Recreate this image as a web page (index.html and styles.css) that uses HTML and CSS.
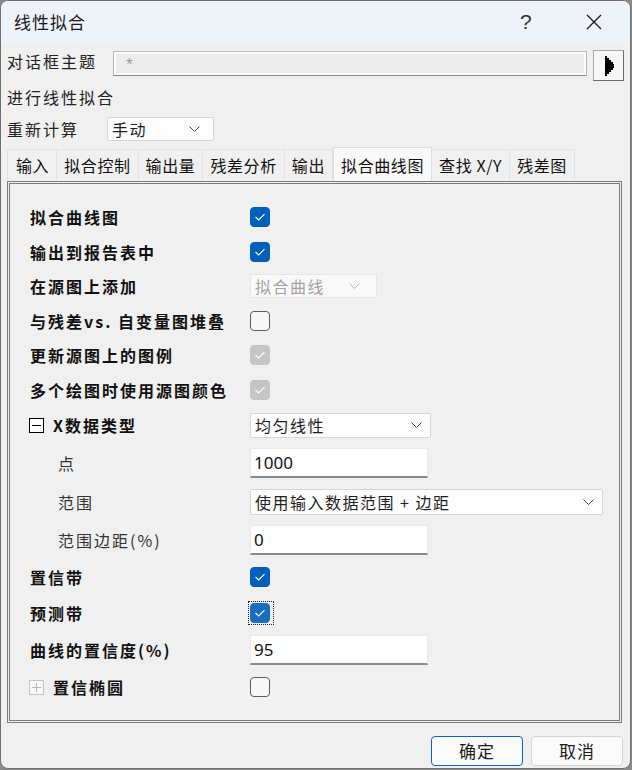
FILE: index.html
```html
<!DOCTYPE html>
<html lang="zh-CN">
<head>
<meta charset="utf-8">
<title>线性拟合</title>
<link rel="stylesheet" href="styles.css">
</head>
<body>
<div class="window">
  <div class="titlebar">
    <span class="title">线性拟合</span>
    <span class="help">?</span>
    <span class="close"><svg width="16" height="16" viewBox="0 0 16 16"><path d="M1 1 L15 15 M15 1 L1 15" stroke="#1a1a1a" stroke-width="1.3" fill="none"/></svg></span>
  </div>
  <div class="body">
    <div class="theme-row">
      <span class="top-label theme-label">对话框主题</span>
      <div class="theme-input">*</div>
      <div class="arrow-btn"><svg width="10" height="20" viewBox="0 0 10 20"><polygon points="0,0 2,0 2,2 4,2 4,4 6,4 6,6 8,6 8,8 9,8 9,12 8,12 8,14 6,14 6,16 4,16 4,18 2,18 2,20 0,20" fill="#000"/></svg></div>
    </div>
    <div class="top-label desc">进行线性拟合</div>
    <div class="recalc-row">
      <span class="top-label recalc-label">重新计算</span>
      <div class="select recalc">手动<svg class="chev" width="11" height="6" viewBox="0 0 11 6"><path d="M0.5 0.5 L5.5 5.5 L10.5 0.5" stroke="#444" stroke-width="1" fill="none"/></svg></div>
    </div>
    <div class="tabs">
      <span class="tab">输入</span>
      <span class="tab">拟合控制</span>
      <span class="tab">输出量</span>
      <span class="tab">残差分析</span>
      <span class="tab">输出</span>
      <span class="tab active">拟合曲线图</span>
      <span class="tab">查找 X/Y</span>
      <span class="tab">残差图</span>
    </div>
    <div class="panel">
      <div class="prow">
        <span class="plabel">拟合曲线图</span>
        <span class="cb checked"><svg width="20" height="20" viewBox="0 0 20 20"><path d="M5.5 10 L8.6 13 L14.5 7.2" stroke="#fff" stroke-width="1.1" fill="none"/></svg></span>
      </div>
      <div class="prow">
        <span class="plabel">输出到报告表中</span>
        <span class="cb checked"><svg width="20" height="20" viewBox="0 0 20 20"><path d="M5.5 10 L8.6 13 L14.5 7.2" stroke="#fff" stroke-width="1.1" fill="none"/></svg></span>
      </div>
      <div class="prow">
        <span class="plabel">在源图上添加</span>
        <div class="select disabled">拟合曲线<svg class="chev" width="11" height="6" viewBox="0 0 11 6"><path d="M0.5 0.5 L5.5 5.5 L10.5 0.5" stroke="#b0b0b0" stroke-width="1" fill="none"/></svg></div>
      </div>
      <div class="prow">
        <span class="plabel">与残差vs. 自变量图堆叠</span>
        <span class="cb"></span>
      </div>
      <div class="prow">
        <span class="plabel">更新源图上的图例</span>
        <span class="cb dis"><svg width="20" height="20" viewBox="0 0 20 20"><path d="M5.5 10 L8.6 13 L14.5 7.2" stroke="#fff" stroke-width="1.1" fill="none"/></svg></span>
      </div>
      <div class="prow">
        <span class="plabel">多个绘图时使用源图颜色</span>
        <span class="cb dis"><svg width="20" height="20" viewBox="0 0 20 20"><path d="M5.5 10 L8.6 13 L14.5 7.2" stroke="#fff" stroke-width="1.1" fill="none"/></svg></span>
      </div>
      <div class="prow row-x">
        <span class="plabel tree"><span class="tbox minus"><svg width="13" height="13" viewBox="0 0 13 13"><path d="M2 6.5 H11" stroke="#000" stroke-width="1"/></svg></span>X数据类型</span>
        <div class="select xtype">均匀线性<svg class="chev" width="11" height="6" viewBox="0 0 11 6"><path d="M0.5 0.5 L5.5 5.5 L10.5 0.5" stroke="#444" stroke-width="1" fill="none"/></svg></div>
      </div>
      <div class="prow row-pt">
        <span class="plabel sub">点</span>
        <div class="field">1000</div>
      </div>
      <div class="prow row-sub">
        <span class="plabel sub">范围</span>
        <div class="select range">使用输入数据范围 + 边距<svg class="chev" width="11" height="6" viewBox="0 0 11 6"><path d="M0.5 0.5 L5.5 5.5 L10.5 0.5" stroke="#444" stroke-width="1" fill="none"/></svg></div>
      </div>
      <div class="prow row-sub">
        <span class="plabel sub">范围边距(%)</span>
        <div class="field">0</div>
      </div>
      <div class="prow row-ci">
        <span class="plabel">置信带</span>
        <span class="cb checked"><svg width="20" height="20" viewBox="0 0 20 20"><path d="M5.5 10 L8.6 13 L14.5 7.2" stroke="#fff" stroke-width="1.1" fill="none"/></svg></span>
      </div>
      <div class="prow row-pb">
        <span class="plabel">预测带</span>
        <span class="focus"><span class="cb checked hover"><svg width="20" height="20" viewBox="0 0 20 20"><path d="M5.5 10 L8.6 13 L14.5 7.2" stroke="#fff" stroke-width="1.1" fill="none"/></svg></span></span>
      </div>
      <div class="prow row-conf">
        <span class="plabel">曲线的置信度(%)</span>
        <div class="field">95</div>
      </div>
      <div class="prow row-ci">
        <span class="plabel tree"><span class="tbox plus"><svg width="13" height="13" viewBox="0 0 13 13"><path d="M2 6.5 H11 M6.5 2 V11" stroke="#b8b8b8" stroke-width="1"/></svg></span>置信椭圆</span>
        <span class="cb"></span>
      </div>
    </div>
    <div class="buttons">
      <span class="btn primary">确定</span>
      <span class="btn">取消</span>
    </div>
  </div>
</div>
</body>
</html>
```
FILE: styles.css
```css
html, body {
  margin: 0;
  padding: 0;
}
body {
  background: #8a8a8a;
  width: 632px;
  height: 770px;
  overflow: hidden;
  font-family: "Noto Sans CJK SC", "Noto Sans", sans-serif;
  color: #1b1b1b;
}
.window {
  box-sizing: border-box;
  width: 631px;
  height: 769px;
  border: 1px solid #6f6f6f;
  border-radius: 8px;
  background: #f0f0f0;
  overflow: hidden;
}
.titlebar {
  height: 42px;
  background: #eef2f9;
  display: flex;
  align-items: center;
  padding-left: 13px;
}
.title {
  font-size: 17px;
  letter-spacing: 1px;
  color: #1a1a1a;
  flex: 1;
  line-height: 20px;
}
.help {
  font-family: "Liberation Sans", sans-serif;
  font-size: 21px;
  font-weight: 300;
  color: #333;
  width: 20px;
  margin-right: 46px;
  line-height: 20px;
}
.close {
  display: flex;
  width: 16px;
  height: 16px;
  margin-right: 28px;
}
.body {
  padding: 0 7px 0 6px;
}
.top-label {
  font-size: 16px;
  letter-spacing: 2px;
  color: #222;
  line-height: 20px;
}
.theme-row {
  display: flex;
  align-items: flex-start;
  margin-top: 7px;
  height: 31px;
}
.theme-label {
  width: 106px;
  flex: none;
  margin-top: 1px;
}
.theme-input {
  box-sizing: border-box;
  width: 474px;
  height: 25px;
  margin-top: 1px;
  border: 1px solid #b9b9b9;
  border-bottom-color: #8c8c8c;
  box-shadow: inset 0 0 0 2px #fbfbfb;
  background: #ececec;
  color: #9a9a9a;
  font-family: "Liberation Sans", sans-serif;
  font-size: 17px;
  line-height: 25px;
  padding-left: 12px;
}
.arrow-btn {
  box-sizing: border-box;
  width: 31px;
  height: 31px;
  margin-left: 6px;
  margin-right: -1px;
  border: 1px solid #a9a9a9;
  border-right-color: #6c6c6c;
  border-bottom-color: #6c6c6c;
  background: #f7f7f7;
  display: flex;
  align-items: center;
  justify-content: center;
  padding-left: 2px;
}
.desc {
  margin-top: 6px;
  height: 20px;
}
.recalc-row {
  display: flex;
  align-items: center;
  margin-top: 10px;
  height: 24px;
}
.recalc-label {
  width: 100px;
  flex: none;
}
.select {
  box-sizing: border-box;
  height: 24px;
  background: #fdfdfd;
  border: 1px solid #d6d6d6;
  border-radius: 2px;
  display: flex;
  align-items: center;
  justify-content: space-between;
  padding: 0 13px 0 4px;
  font-size: 16px;
  letter-spacing: 1.5px;
  color: #1e1e1e;
  font-weight: 400;
}
.recalc {
  width: 107px;
  padding-left: 4px;
}
.chev {
  flex: none;
}
.tabs {
  display: flex;
  align-items: flex-end;
  margin-top: 6px;
  height: 33px;
  position: relative;
  z-index: 2;
}
.tab {
  box-sizing: border-box;
  height: 31px;
  padding: 0 7px;
  border: 1px solid #e2e2e2;
  border-bottom: none;
  border-left: none;
  background: #f0f0f0;
  font-size: 16px;
  letter-spacing: 0.6px;
  line-height: 30px;
  color: #111;
}
.tab:first-child {
  border-left: 1px solid #e2e2e2;
  padding-left: 8px;
  padding-right: 7px;
}
.tab.active {
  height: 34px;
  margin-bottom: -1px;
  background: #f9f9f9;
  border: 1px solid #dcdcdc;
  border-bottom: none;
  line-height: 34px;
}
.panel {
  box-sizing: border-box;
  width: 615px;
  height: 542px;
  margin-top: 1px;
  border: 3px double #7c7c7c;
  padding: 16px 0 0 20px;
}
.prow {
  display: flex;
  align-items: center;
  height: 34.5px;
}
.row-x { height: 36px; }
.row-pt { height: 40px; }
.row-sub { height: 38px; }
.row-ci { height: 36px; }
.row-pb { height: 35px; }
.row-conf { height: 39px; }
.plabel {
  width: 220px;
  flex: none;
  font-size: 16px;
  font-weight: 700;
  letter-spacing: 2px;
  color: #111;
  line-height: 20px;
}
.plabel.sub {
  font-weight: 400;
  padding-left: 28px;
  box-sizing: border-box;
  color: #333;
  letter-spacing: 2px;
}
.plabel.tree {
  display: flex;
  align-items: center;
  margin-left: -1px;
  width: 221px;
}
.tbox {
  box-sizing: border-box;
  width: 15px;
  height: 15px;
  margin-right: 9px;
  display: flex;
  align-items: center;
  justify-content: center;
  background: #fff;
}
.tbox.minus { border: 1px solid #000; }
.tbox.plus { border: 1px solid #c4c4c4; background: #f8f8f8; }
.cb {
  box-sizing: border-box;
  width: 20px;
  height: 20px;
  border-radius: 4px;
  border: 1px solid #5f5f5f;
  background: #f7f7f7;
  display: block;
}
.cb svg { display: block; margin: -1px; }
.cb.checked {
  background: #005fb8;
  border-color: #005fb8;
}
.cb.checked.hover {
  background: #196ebf;
  border-color: #196ebf;
}
.cb.dis {
  background: #c5c5c5;
  border-color: #c5c5c5;
}
.focus {
  display: block;
  outline: 1px dotted #222;
  outline-offset: 1px;
  padding-right: 2px;
}
.select.disabled {
  width: 127px;
  background: #f9f9f9;
  border-color: #e6e6e6;
  color: #a3a3a3;
  padding-right: 16px;
}
.select.xtype {
  width: 181px;
  height: 25px;
  padding-right: 8px;
}
.select.range {
  width: 353px;
  height: 26px;
  padding-right: 8px;
}
.field {
  box-sizing: border-box;
  width: 178px;
  height: 30px;
  background: #fff;
  border: 1px solid #e8e8e8;
  border-bottom: 2px solid #8a8a8a;
  border-radius: 2px 2px 0 0;
  font-family: "Noto Sans", sans-serif;
  font-size: 17px;
  line-height: 27px;
  padding-left: 3px;
  color: #111;
}
.buttons {
  display: flex;
  justify-content: flex-end;
  gap: 8px;
  margin-top: 13px;
}
.btn {
  box-sizing: border-box;
  width: 92px;
  height: 30px;
  border: 1px solid #d3d3d3;
  border-radius: 4px;
  background: #fbfbfb;
  font-size: 17px;
  letter-spacing: 1px;
  text-align: center;
  line-height: 28px;
  color: #1a1a1a;
}
.btn.primary {
  border-color: #0a64c0;
}
```
